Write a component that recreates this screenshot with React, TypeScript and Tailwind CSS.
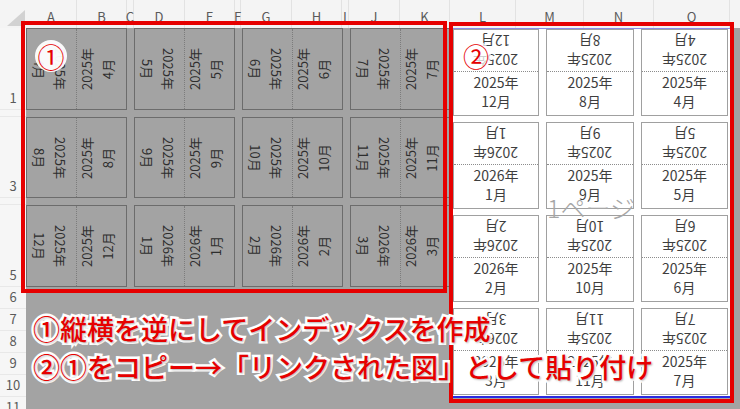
const jp = "font-['Noto_Sans_CJK_JP','Noto_Sans',sans-serif]";

const cols: [string, string][] = [
  ['A', 'w-[51px]'], ['B', 'w-[50px]'], ['C', 'w-[7px]'], ['D', 'w-[51px]'], ['E', 'w-[50px]'],
  ['F', 'w-[6px]'], ['G', 'w-[51px]'], ['H', 'w-[50px]'], ['I', 'w-[7px]'], ['J', 'w-[51px]'],
  ['K', 'w-[50px]'], ['L', 'w-[66px]'], ['M', 'w-[68px]'], ['N', 'w-[70px]'], ['O', 'w-[76px]'],
];

const rows: [string, string][] = [
  ['1', 'h-[82px]'], ['', 'h-[7px]'], ['3', 'h-[81px]'], ['', 'h-[7px]'], ['5', 'h-[82px]'],
  ['6', 'h-[22px]'], ['7', 'h-[22px]'], ['8', 'h-[22px]'], ['9', 'h-[22px]'], ['10', 'h-[22px]'], ['11', 'h-[22px]'],
];

// 左: 4月〜翌3月を横に並べたもの
const leftCards: [number, number][] = [
  [2025, 4], [2025, 5], [2025, 6], [2025, 7],
  [2025, 8], [2025, 9], [2025, 10], [2025, 11],
  [2025, 12], [2026, 1], [2026, 2], [2026, 3],
];

// 右: リンクされた図 (縦横が逆)
const rightCards: [number, number][] = [
  [2025, 12], [2025, 8], [2025, 4],
  [2026, 1], [2025, 9], [2025, 5],
  [2026, 2], [2025, 10], [2025, 6],
  [2026, 3], [2025, 11], [2025, 7],
];

function LeftCard({ year, month }: { year: number; month: number }) {
  return (
    <div className="flex h-full border border-[#6c6c6c] text-[13px] leading-[21px] text-[#2e2e2e]">
      <div className="flex flex-1 items-center justify-center overflow-hidden border-r border-dotted border-[#7c7c7c]">
        <div className="mr-[4px] w-[80px] shrink-0 rotate-90 text-center">
          {year}年<br />{month}月
        </div>
      </div>
      <div className="flex flex-1 items-center justify-center overflow-hidden">
        <div className="mr-[9px] w-[80px] shrink-0 -rotate-90 text-center">
          {year}年<br />{month}月
        </div>
      </div>
    </div>
  );
}

function RightCard({ year, month }: { year: number; month: number }) {
  return (
    <div className="flex h-full flex-col border border-[#a0a0a0] bg-white text-[14px] leading-[19px] text-[#3e3e3e]">
      <div className="flex flex-1 items-center justify-center border-b border-dotted border-[#8c8c8c]">
        <div className="rotate-180 text-center">
          {year}年<br />{month}月
        </div>
      </div>
      <div className="flex flex-1 items-center justify-center pb-[3px]">
        <div className="text-center">
          {year}年<br />{month}月
        </div>
      </div>
    </div>
  );
}

export default function App() {
  return (
    <div className={`relative h-[409px] w-[740px] overflow-hidden bg-[#a3a3a3] ${jp}`}>
      {/* 列見出し */}
      <div className="flex h-[28px] bg-[#f4f4f4] text-[13px] leading-[16px] text-[#5a5a5a]">
        <div className="relative w-[26px] shrink-0">
          <svg className="absolute left-[7px] top-[10px]" width="18" height="16" viewBox="0 0 18 16">
            <polygon points="18,0 18,16 0,16" fill="#d2d2d2" />
          </svg>
        </div>
        {cols.map(([l, w]) => (
          <div key={l} className={`${w} flex shrink-0 justify-center border-r border-[#e2e2e2] pt-[9px]`}>
            {l}
          </div>
        ))}
        <div className="flex-1" />
      </div>

      <div className="flex">
        {/* 行見出し */}
        <div className="flex w-[26px] shrink-0 flex-col bg-[#f6f6f6] text-[13px] leading-[14px] text-[#5a5a5a]">
          {rows.map(([n, h], i) => (
            <div key={i} className={`${h} flex shrink-0 items-end justify-center overflow-hidden border-b border-[#e8e8e8] pb-[4px]`}>
              {n}
            </div>
          ))}
        </div>

        <div className="flex items-start">
          {/* ① インデックス */}
          <div className="grid w-[425px] grid-cols-[repeat(4,101px)] grid-rows-[82px_81px_82px] gap-x-[7px] gap-y-[7px]">
            {leftCards.map(([y, m]) => (
              <LeftCard key={`${y}-${m}`} year={y} month={m} />
            ))}
          </div>

          {/* ② リンクされた図 (1ページ) */}
          <div className="ml-[1px] h-[370px] w-[281px] overflow-hidden border-t border-b-2 border-t-[#8a8ae6] border-b-[#2a2ae0] bg-white pl-[1px]">
            <div className="grid grid-cols-[86px_88px_87px] grid-rows-[repeat(4,87px)] gap-x-[7px] gap-y-[6px]">
              {rightCards.map(([y, m]) => (
                <RightCard key={`${y}-${m}`} year={y} month={m} />
              ))}
            </div>
          </div>
        </div>
      </div>

      {/* 改ページプレビューの透かし */}
      <div className="pointer-events-none absolute left-[547px] top-[192px] text-[25px] font-light leading-[30px] text-[#a6a6a6]">
        1ページ
      </div>

      {/* 赤枠 */}
      <div className="absolute left-[21px] top-[21px] h-[272px] w-[426px] border-[4px] border-[#e60000]" />
      <div className="absolute left-[449px] top-[22px] h-[381px] w-[285px] border-[4px] border-[#e60000]" />

      {/* 番号 */}
      <div className="absolute left-[35px] top-[40px] flex h-[32px] w-[32px] items-center justify-center rounded-full bg-white/95 text-[27px] leading-none text-[#e60000]">
        ①
      </div>
      <div className="absolute left-[461px] top-[41px] flex h-[30px] w-[30px] items-center justify-center rounded-full bg-white/75 text-[26px] leading-none text-[#e60000]">
        ②
      </div>

      {/* 説明 */}
      <div className="absolute left-[33px] top-[310px] whitespace-nowrap text-[27px] font-medium leading-[38px] text-[#e60000] [-webkit-text-stroke:5px_white] [paint-order:stroke_fill] [text-shadow:1px_1px_2px_rgba(0,0,0,0.3)]">
        <div>①縦横を逆にしてインデックスを作成</div>
        <div>②①をコピー→「リンクされた図」として貼り付け</div>
      </div>
    </div>
  );
}
